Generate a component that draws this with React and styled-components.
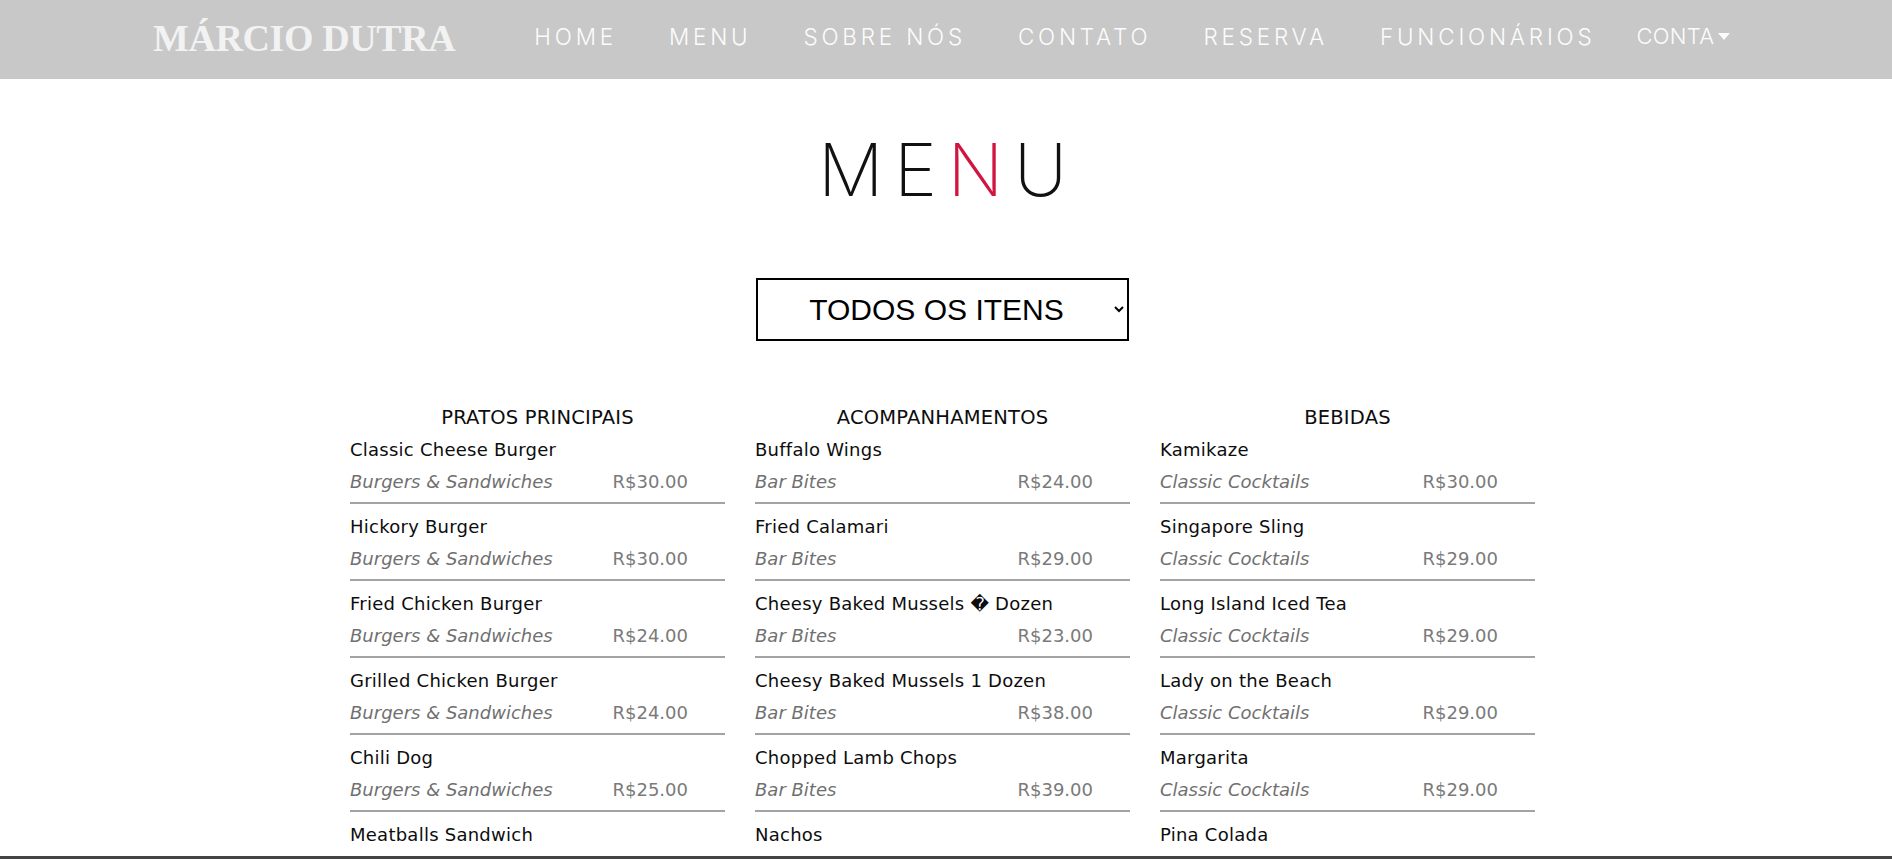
import React from "react";
import styled, { createGlobalStyle } from "styled-components";

const GlobalStyle = createGlobalStyle`
  html, body { margin: 0; padding: 0; overflow: hidden; background: #fff; }
  body { font-family: "DejaVu Sans", "Liberation Sans", sans-serif; color: #111; }
  * { box-sizing: border-box; }
`;

const Page = styled.div`
  height: 100vh;
  display: flex;
  flex-direction: column;
`;

const Header = styled.header`
  flex: 0 0 79px;
  background: #c8c8c8;
`;

const HeaderInner = styled.div`
  width: 1586px;
  height: 100%;
  margin: 0 auto;
  padding-bottom: 4px;
  display: flex;
  align-items: center;
`;

const Logo = styled.a`
  font-family: "Liberation Serif", "Times New Roman", serif;
  font-weight: 700;
  font-size: 38px;
  letter-spacing: -0.4px;
  color: #f2f2f2;
  text-decoration: none;
  white-space: nowrap;
`;

const Nav = styled.nav`
  margin-left: 79px;
  padding-bottom: 3px;
  display: flex;
  align-items: center;
  gap: 52px;
`;

const NavLink = styled.a`
  font-family: "Inter", "DejaVu Sans", sans-serif;
  font-weight: 300;
  font-size: 22.5px;
  letter-spacing: 3.8px;
  color: #fcfcfc;
  text-decoration: none;
  white-space: nowrap;
`;

const AccountLink = styled.a`
  display: flex;
  align-items: center;
  gap: 4px;
  margin-left: -11px;
  font-family: "Inter", "DejaVu Sans", sans-serif;
  font-weight: 300;
  font-size: 22px;
  letter-spacing: 0.3px;
  color: #fcfcfc;
  text-decoration: none;
`;

const Caret = styled.span`
  width: 0;
  height: 0;
  border-left: 6.5px solid transparent;
  border-right: 6.5px solid transparent;
  border-top: 7px solid #fcfcfc;
`;

const Main = styled.main`
  flex: 1;
  min-height: 0;
  overflow: hidden;
  padding-right: 7px;
`;

const Title = styled.h1`
  margin: 54px 0 0;
  text-align: center;
  font-family: "Inter", "DejaVu Sans", sans-serif;
  font-weight: 200;
  font-size: 73px;
  line-height: 1;
  letter-spacing: 10.5px;
  text-indent: 10.5px;
  color: #111;
`;

const Accent = styled.span`
  color: #d0163f;
`;

const Filter = styled.select`
  display: block;
  margin: 72px auto 0;
  width: 373px;
  height: 63px;
  border: 2px solid #000;
  border-radius: 0;
  background: #fff;
  color: #000;
  font-family: "Liberation Sans", Arial, sans-serif;
  font-size: 30px;
  text-align: center;
  text-align-last: center;
  padding: 0 8px;
`;

const Columns = styled.div`
  margin: 67px auto 0;
  width: 1185px;
  display: grid;
  grid-template-columns: repeat(3, 375px);
  gap: 30px;
`;

const Column = styled.section`
  display: flex;
  flex-direction: column;
`;

const ColumnTitle = styled.h2`
  margin: 0;
  font-size: 19.5px;
  line-height: 19px;
  font-weight: 400;
  letter-spacing: 0.2px;
  text-align: center;
  color: #0d0d0d;
`;

const Item = styled.div`
  padding: 11px 0 8px;
  border-bottom: 2px solid #a3a3a3;
`;

const ItemName = styled.div`
  font-size: 18px;
  line-height: 24px;
  letter-spacing: 0.25px;
  color: #0d0d0d;
  white-space: nowrap;
`;

const ItemMeta = styled.div`
  margin-top: 8px;
  display: flex;
  font-size: 18px;
  line-height: 24px;
`;

const Category = styled.span`
  width: 70%;
  font-style: italic;
  color: #707070;
  font-weight: 400;
`;

const Price = styled.span`
  color: #7a7a7a;
`;

const columns = [
  {
    title: "PRATOS PRINCIPAIS",
    category: "Burgers & Sandwiches",
    items: [
      ["Classic Cheese Burger", "30.00"],
      ["Hickory Burger", "30.00"],
      ["Fried Chicken Burger", "24.00"],
      ["Grilled Chicken Burger", "24.00"],
      ["Chili Dog", "25.00"],
      ["Meatballs Sandwich", "28.00"],
      ["Steak Sandwich", "35.00"],
    ],
  },
  {
    title: "ACOMPANHAMENTOS",
    category: "Bar Bites",
    items: [
      ["Buffalo Wings", "24.00"],
      ["Fried Calamari", "29.00"],
      ["Cheesy Baked Mussels \uFFFD Dozen", "23.00"],
      ["Cheesy Baked Mussels 1 Dozen", "38.00"],
      ["Chopped Lamb Chops", "39.00"],
      ["Nachos", "26.00"],
      ["Onion Rings", "18.00"],
    ],
  },
  {
    title: "BEBIDAS",
    category: "Classic Cocktails",
    items: [
      ["Kamikaze", "30.00"],
      ["Singapore Sling", "29.00"],
      ["Long Island Iced Tea", "29.00"],
      ["Lady on the Beach", "29.00"],
      ["Margarita", "29.00"],
      ["Pina Colada", "29.00"],
      ["Mojito", "29.00"],
    ],
  },
];

const FooterEdge = styled.footer`
  flex: 0 0 3px;
  background: #444;
`;

export default function App() {
  return (
    <>
      <GlobalStyle />
      <Page>
        <Header>
          <HeaderInner>
            <Logo href="#">MÁRCIO DUTRA</Logo>
            <Nav>
              <NavLink href="#">HOME</NavLink>
              <NavLink href="#">MENU</NavLink>
              <NavLink href="#">SOBRE NÓS</NavLink>
              <NavLink href="#">CONTATO</NavLink>
              <NavLink href="#">RESERVA</NavLink>
              <NavLink href="#">FUNCIONÁRIOS</NavLink>
              <AccountLink href="#">
                CONTA
                <Caret />
              </AccountLink>
            </Nav>
          </HeaderInner>
        </Header>
        <Main>
          <Title>
            ME<Accent>N</Accent>U
          </Title>
          <Filter defaultValue="all">
            <option value="all">TODOS OS ITENS</option>
            <option value="main">PRATOS PRINCIPAIS</option>
            <option value="sides">ACOMPANHAMENTOS</option>
            <option value="drinks">BEBIDAS</option>
          </Filter>
          <Columns>
            {columns.map((col) => (
              <Column key={col.title}>
                <ColumnTitle>{col.title}</ColumnTitle>
                {col.items.map(([name, price]) => (
                  <Item key={name}>
                    <ItemName>{name}</ItemName>
                    <ItemMeta>
                      <Category>{col.category}</Category>
                      <Price>R${price}</Price>
                    </ItemMeta>
                  </Item>
                ))}
              </Column>
            ))}
          </Columns>
        </Main>
        <FooterEdge />
      </Page>
    </>
  );
}
